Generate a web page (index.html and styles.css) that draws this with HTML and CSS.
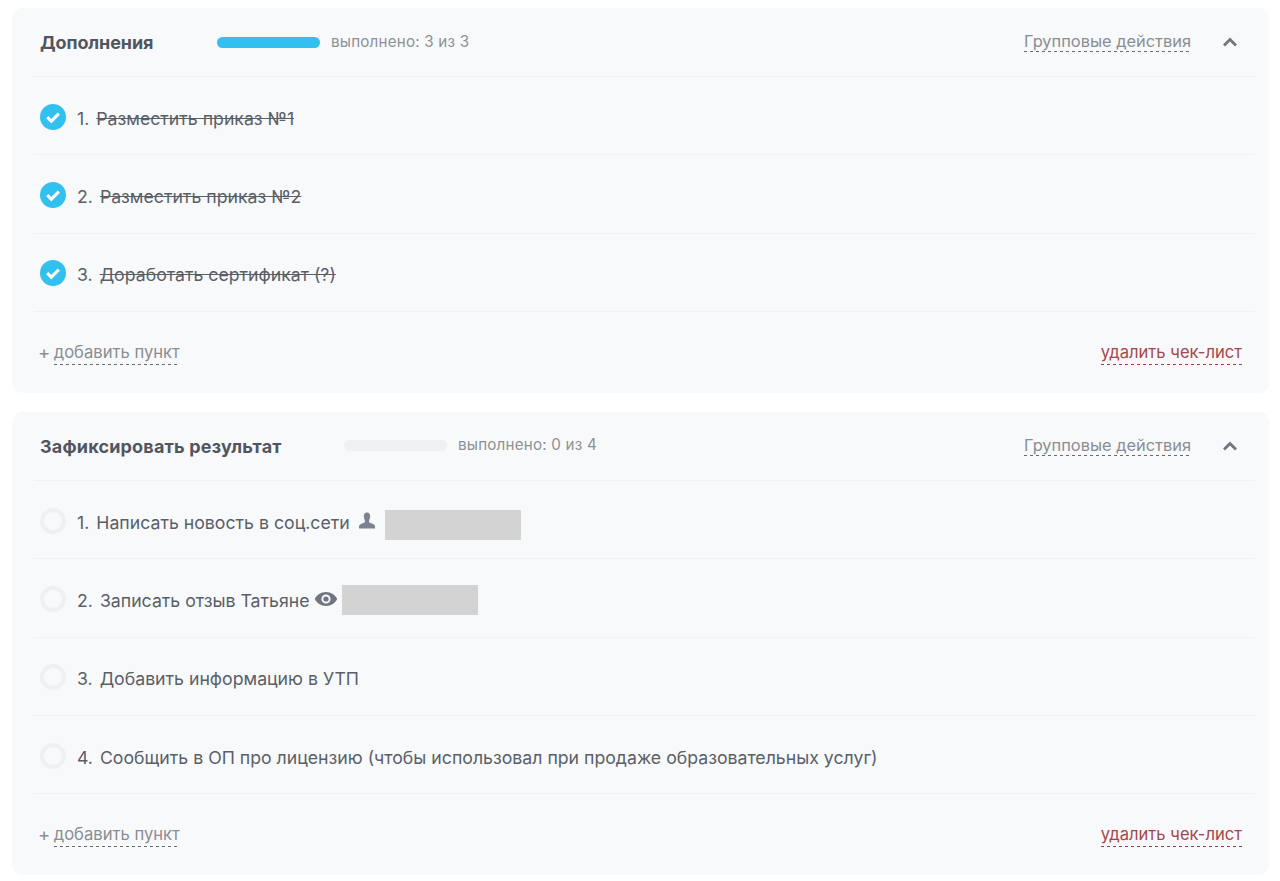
FILE: index.html
```html
<!DOCTYPE html>
<html lang="ru">
<head>
<meta charset="utf-8">
<title>Чек-листы</title>
<link rel="stylesheet" href="styles.css">
</head>
<body>
<section class="card">
  <header class="head">
    <h2 class="title title-a">Дополнения</h2>
    <div class="bar"><div class="bar-fill"></div></div>
    <span class="status">выполнено: 3 из 3</span>
    <span class="group dashed">Групповые действия</span>
    <svg class="chev" width="16" height="10" viewBox="0 0 16 10"><path d="M2 8.5L8 2.5L14 8.5" fill="none" stroke="#6f7680" stroke-width="2.8"/></svg>
  </header>
  <div class="row">
    <svg class="check" width="26" height="26" viewBox="0 0 26 26"><circle cx="13" cy="13" r="13" fill="#32c0ef"/><path d="M7.2 13.2L11.3 17.2L18.8 9.6" fill="none" stroke="#fff" stroke-width="3.1"/></svg>
    <span class="num">1.</span><span class="text done">Разместить приказ №1</span>
  </div>
  <div class="row">
    <svg class="check" width="26" height="26" viewBox="0 0 26 26"><circle cx="13" cy="13" r="13" fill="#32c0ef"/><path d="M7.2 13.2L11.3 17.2L18.8 9.6" fill="none" stroke="#fff" stroke-width="3.1"/></svg>
    <span class="num">2.</span><span class="text done">Разместить приказ №2</span>
  </div>
  <div class="row">
    <svg class="check" width="26" height="26" viewBox="0 0 26 26"><circle cx="13" cy="13" r="13" fill="#32c0ef"/><path d="M7.2 13.2L11.3 17.2L18.8 9.6" fill="none" stroke="#fff" stroke-width="3.1"/></svg>
    <span class="num">3.</span><span class="text done">Доработать сертификат (?)</span>
  </div>
  <footer class="foot">
    <span class="add"><span class="plus">+</span><span class="dashed">добавить пункт</span></span>
    <span class="remove">удалить чек-лист</span>
  </footer>
</section>
<section class="card">
  <header class="head">
    <h2 class="title title-b">Зафиксировать результат</h2>
    <div class="bar"></div>
    <span class="status">выполнено: 0 из 4</span>
    <span class="group dashed">Групповые действия</span>
    <svg class="chev" width="16" height="10" viewBox="0 0 16 10"><path d="M2 8.5L8 2.5L14 8.5" fill="none" stroke="#6f7680" stroke-width="2.8"/></svg>
  </header>
  <div class="row">
    <span class="radio"></span>
    <span class="num">1.</span><span class="text">Написать новость в соц.сети</span>
    <svg class="ico-user" width="18" height="18" viewBox="0 0 18 18"><path d="M9 0.5C6.8 0.5 5.6 2.2 5.8 4.6C6 6.6 6.8 8 7 9C7.1 10 6.6 10.6 5 11.2C2.8 12 1 12.6 1 14.5V16.5H17V14.5C17 12.6 15.2 12 13 11.2C11.4 10.6 10.9 10 11 9C11.2 8 12 6.6 12.2 4.6C12.4 2.2 11.2 0.5 9 0.5Z" fill="#7b8290"/></svg>
    <div class="redact redact-a"></div>
  </div>
  <div class="row">
    <span class="radio"></span>
    <span class="num">2.</span><span class="text">Записать отзыв Татьяне</span>
    <svg class="ico-eye" width="24" height="16" viewBox="0 0 24 16"><path fill-rule="evenodd" d="M12 1C6.8 1 2.8 4.2 0.8 8C2.8 11.8 6.8 15 12 15C17.2 15 21.2 11.8 23.2 8C21.2 4.2 17.2 1 12 1ZM12 3.4A4.6 4.6 0 1 1 12 12.6A4.6 4.6 0 1 1 12 3.4Z" fill="#6f7680"/><circle cx="12" cy="8" r="2.6" fill="#6f7680"/></svg>
    <div class="redact redact-b"></div>
  </div>
  <div class="row">
    <span class="radio"></span>
    <span class="num">3.</span><span class="text">Добавить информацию в УТП</span>
  </div>
  <div class="row">
    <span class="radio"></span>
    <span class="num">4.</span><span class="text">Сообщить в ОП про лицензию (чтобы использовал при продаже образовательных услуг)</span>
  </div>
  <footer class="foot">
    <span class="add"><span class="plus">+</span><span class="dashed">добавить пункт</span></span>
    <span class="remove">удалить чек-лист</span>
  </footer>
</section>
</body>
</html>
```
FILE: styles.css
```css
* { box-sizing: border-box; }
html, body { height: 100%; }
body {
  margin: 0;
  padding: 8px 11px 0 12px;
  background: #fff;
  font-family: Inter, "Liberation Sans", sans-serif;
  color: #51565e;
  overflow: hidden;
  -webkit-font-smoothing: antialiased;
}
.card {
  background: #f8f9fb;
  border-radius: 10px;
  padding: 0 14px 0 22px;
  margin-bottom: 19px;
}
.head {
  display: flex;
  align-items: center;
  height: 69px;
  padding: 0 17px 0 6px;
  border-bottom: 1px solid #f0f1f4;
}
.title {
  margin: 0;
  font-size: 18px;
  line-height: 24px;
  font-weight: 700;
  color: #51565e;
  position: relative;
  top: 1px;
}
.title-a { width: 177px; letter-spacing: -0.1px; }
.title-b { width: 304px; letter-spacing: 0.18px; }
.bar {
  width: 103px;
  height: 11px;
  border-radius: 6px;
  background: #eff0f2;
}
.bar-fill {
  height: 100%;
  border-radius: 6px;
  background: #32c0ef;
}
.status {
  margin-left: 11px;
  font-size: 15.2px;
  color: #8d9196;
  letter-spacing: 0.2px;
  position: relative;
  top: -1px;
}
.group {
  margin-left: auto;
  font-size: 16.4px;
  line-height: 19px;
  color: #8a8d92;
}
.dashed {
  padding-bottom: 1px;
  background: repeating-linear-gradient(90deg, #666a70 0 3px, transparent 3px 6px) left bottom / 100% 1px no-repeat;
}
.chev { margin-left: 31px; }
.row {
  display: flex;
  align-items: center;
  height: 78.33px;
  padding: 2px 0 0 6px;
  border-bottom: 1px solid #f0f1f4;
  font-size: 17.7px;
  color: #5a5f67;
}
.check { flex: none; }
.radio {
  flex: none;
  width: 26px;
  height: 26px;
  border-radius: 50%;
  border: 4px solid #eef0f2;
}
.num { margin: 3px 7px 0 11px; }
.text { margin-top: 3px; }
.done { text-decoration: line-through; }
.ico-user { margin-left: 8px; }
.ico-eye { margin-left: 4px; }
.redact { height: 30px; width: 136px; background: #d3d3d3; }
.redact-a { margin-left: 9px; margin-top: 9px; }
.redact-b { margin-left: 4px; margin-top: 3px; }
.foot {
  display: flex;
  justify-content: space-between;
  align-items: flex-start;
  height: 81px;
  padding: 28px 13px 0 4px;
  font-size: 16.6px;
  line-height: 24px;
}
.add { color: #8a8d92; display: flex; align-items: flex-start; }
.plus { font-size: 18.5px; margin-right: 3.5px; }
.remove {
  color: #a5474a;
  padding-bottom: 1px;
  background: repeating-linear-gradient(90deg, #a83a3a 0 3px, transparent 3px 6px) left bottom / 100% 1px no-repeat;
}
```
